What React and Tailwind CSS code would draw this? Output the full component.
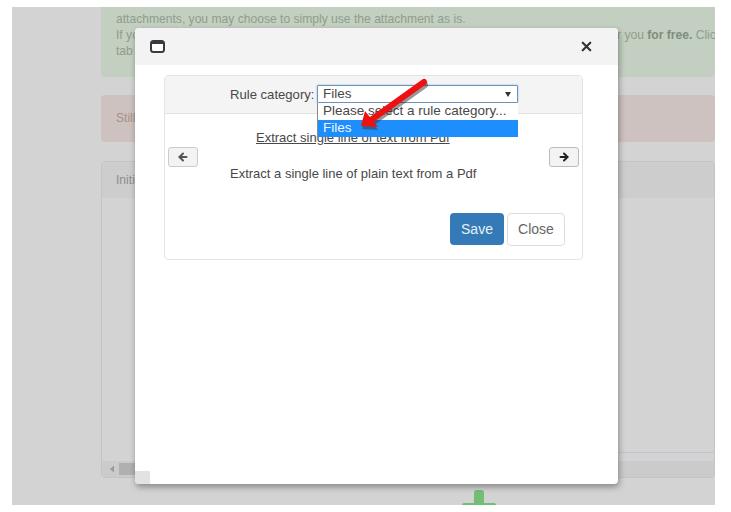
import React from 'react';
import { ArrowLeft, ArrowRight, X } from 'lucide-react';

const font = { fontFamily: '"Liberation Sans", Arial, sans-serif' };

const PageBehind = () => (
  <div className="w-[703px] h-[498px] ml-[12px] bg-[#d3d3d3] overflow-hidden pl-[89px]">
    <div className="h-[70px] bg-[#c3cfc1] rounded-b-[4px] pl-[15px] pt-[4px] text-[12.1px] leading-[16px] text-[#8f9d8c] whitespace-nowrap overflow-hidden">
      <p>attachments, you may choose to simply use the attachment as is.</p>
      <p className="flex">
        <span className="w-[501px] shrink-0">If you would like, we can build a custom rule</span>
        <span>r you <b className="font-bold text-[#7f8d7c]">for free.</b> Clic</span>
      </p>
      <p>tab</p>
    </div>
    <div className="mt-[18px] h-[47px] bg-[#cdc2c0] rounded-[4px] pl-[15px] pt-[15px] text-[12.1px] leading-[16px] text-[#a98f85]">Still</div>
    <div className="mt-[19px] h-[317px] border border-[#c4c4c4] rounded-[4px] flex flex-col">
      <div className="h-[36px] bg-[#cdcdcd] pl-[14px] pt-[10px] text-[12.1px] leading-[16px] text-[#8e8e8e]">Initial</div>
      <div className="flex-1" />
      <div className="h-px ml-[514px] bg-[#b9c6d4]" />
      <div className="h-[8px]" />
      <div className="h-[16px] bg-[#cbcbcb] flex items-center">
        <svg width="16" height="16" viewBox="0 0 16 16" className="ml-[2px]">
          <path d="M10 4.5 L6 8 L10 11.5 Z" fill="#9a9a9a" />
        </svg>
        <div className="ml-[-1px] w-[20px] h-[12px] bg-[#b0b0b0]" />
      </div>
    </div>
    <div className="mt-[12px] ml-[361px] relative w-[34px] h-[15px]">
      <div className="mx-auto w-[10px] h-[15px] rounded-t-[3px] bg-[#72bf74]" />
      <div className="absolute left-0 top-[13px] w-[34px] h-[2px] rounded-t-[2px] bg-[#72bf74]" />
    </div>
  </div>
);

const CategorySelect = () => (
  <div className="relative w-[201px] h-[18px]">
    <div className="h-[18px] border border-[#6f93b8] bg-white rounded-[1px] flex items-center justify-between pl-[5px] pr-[6px] text-[13.5px] text-[#484848] shadow-[0_0_2px_rgba(80,150,230,0.7)]">
      <span>Files</span>
      <svg width="6" height="5" viewBox="0 0 6 5"><path d="M0 0 H6 L3 5 Z" fill="#333" /></svg>
    </div>
    {/* open dropdown list */}
    <div className="absolute left-0 top-[18px] w-[201px] h-[34px] bg-white border-l border-[#8a8a8a] text-[13.5px] leading-[16px] z-10">
      <div className="h-[17px] pl-[5px] text-[#484848] whitespace-nowrap">Please select a rule category...</div>
      <div className="h-[17px] pl-[5px] bg-[#1e8efc] text-[#eef6ff]">Files</div>
    </div>
    {/* red annotation arrow */}
    <svg width="90" height="70" viewBox="0 0 90 70" className="absolute left-[36px] top-[-14px] z-20">
      <path d="M71 11 L18 49" stroke="#333" strokeWidth="6" strokeLinecap="round" opacity="0.5" transform="translate(1 3)" />
      <path d="M8 55 L12 41 L24 56 Z" fill="#333" opacity="0.5" transform="translate(1 3)" />
      <path d="M71 11 L18 49" stroke="#ee1111" strokeWidth="6" strokeLinecap="round" />
      <path d="M8 55 L12 40 L25 56 Z" fill="#ee1111" />
    </svg>
  </div>
);

const Modal = () => (
  <div className="absolute left-[135px] top-[28px] w-[483px] h-[456px] bg-white rounded-[4px] shadow-[1px_3px_6px_rgba(0,0,0,0.35)] overflow-hidden">
    <div className="h-[37px] bg-[#f3f3f3] flex items-center justify-between pl-[15px] pr-[24px]">
      <svg width="15" height="13" viewBox="0 0 15 13">
        <rect x="1" y="1" width="13" height="11" rx="2.5" fill="#fff" stroke="#3a3a42" strokeWidth="2" />
        <rect x="1" y="1" width="13" height="3" rx="1" fill="#3a3a42" />
      </svg>
      <X size={15} strokeWidth={3.5} className="text-[#333]" />
    </div>
    <div className="mt-[10px] ml-[29px] w-[419px] h-[185px] border border-[#e3e3e3] rounded-[4px]">
      <div className="h-[38px] bg-[#f4f4f4] border-b border-[#e3e3e3] flex items-start pl-[65px] pt-[9px] text-[13.1px] leading-[18px] text-[#484848]">
        <span className="w-[87px] whitespace-nowrap pt-px">Rule category:</span>
        <CategorySelect />
      </div>
      <div className="relative">
        <div className="flex items-start justify-between px-[3px] pt-[33px]">
          <button className="w-[30px] h-[20px] border border-[#ccc] rounded-[3px] bg-[#f3f3f3] flex items-center justify-center text-[#555]">
            <ArrowLeft size={12} strokeWidth={4} />
          </button>
          <button className="w-[30px] h-[20px] border border-[#bbb] rounded-[3px] bg-[#f3f3f3] flex items-center justify-center text-[#222]">
            <ArrowRight size={12} strokeWidth={4} />
          </button>
        </div>
        <p className="absolute left-[91px] top-[15px] text-[13px] leading-[18px] text-[#484848] underline">Extract single line of text from Pdf</p>
        <p className="absolute left-[65px] top-[51px] text-[13px] leading-[18px] text-[#484848]">Extract a single line of plain text from a Pdf</p>
        <div className="absolute right-[17px] top-[99px] flex gap-[3px] text-[14px]">
          <button className="w-[54px] h-[32px] rounded-[4px] bg-[#337ab7] text-[#e8f0f7]">Save</button>
          <button className="w-[58px] h-[33px] rounded-[4px] bg-white border border-[#ddd] text-[#666]">Close</button>
        </div>
      </div>
    </div>
    <div className="absolute left-0 bottom-0 w-[15px] h-[13px] bg-[#e2e2e2]" />
  </div>
);

export default function App() {
  return (
    <div className="relative w-[731px] h-[512px] bg-white pt-[7px] overflow-hidden" style={font}>
      <PageBehind />
      <Modal />
    </div>
  );
}
